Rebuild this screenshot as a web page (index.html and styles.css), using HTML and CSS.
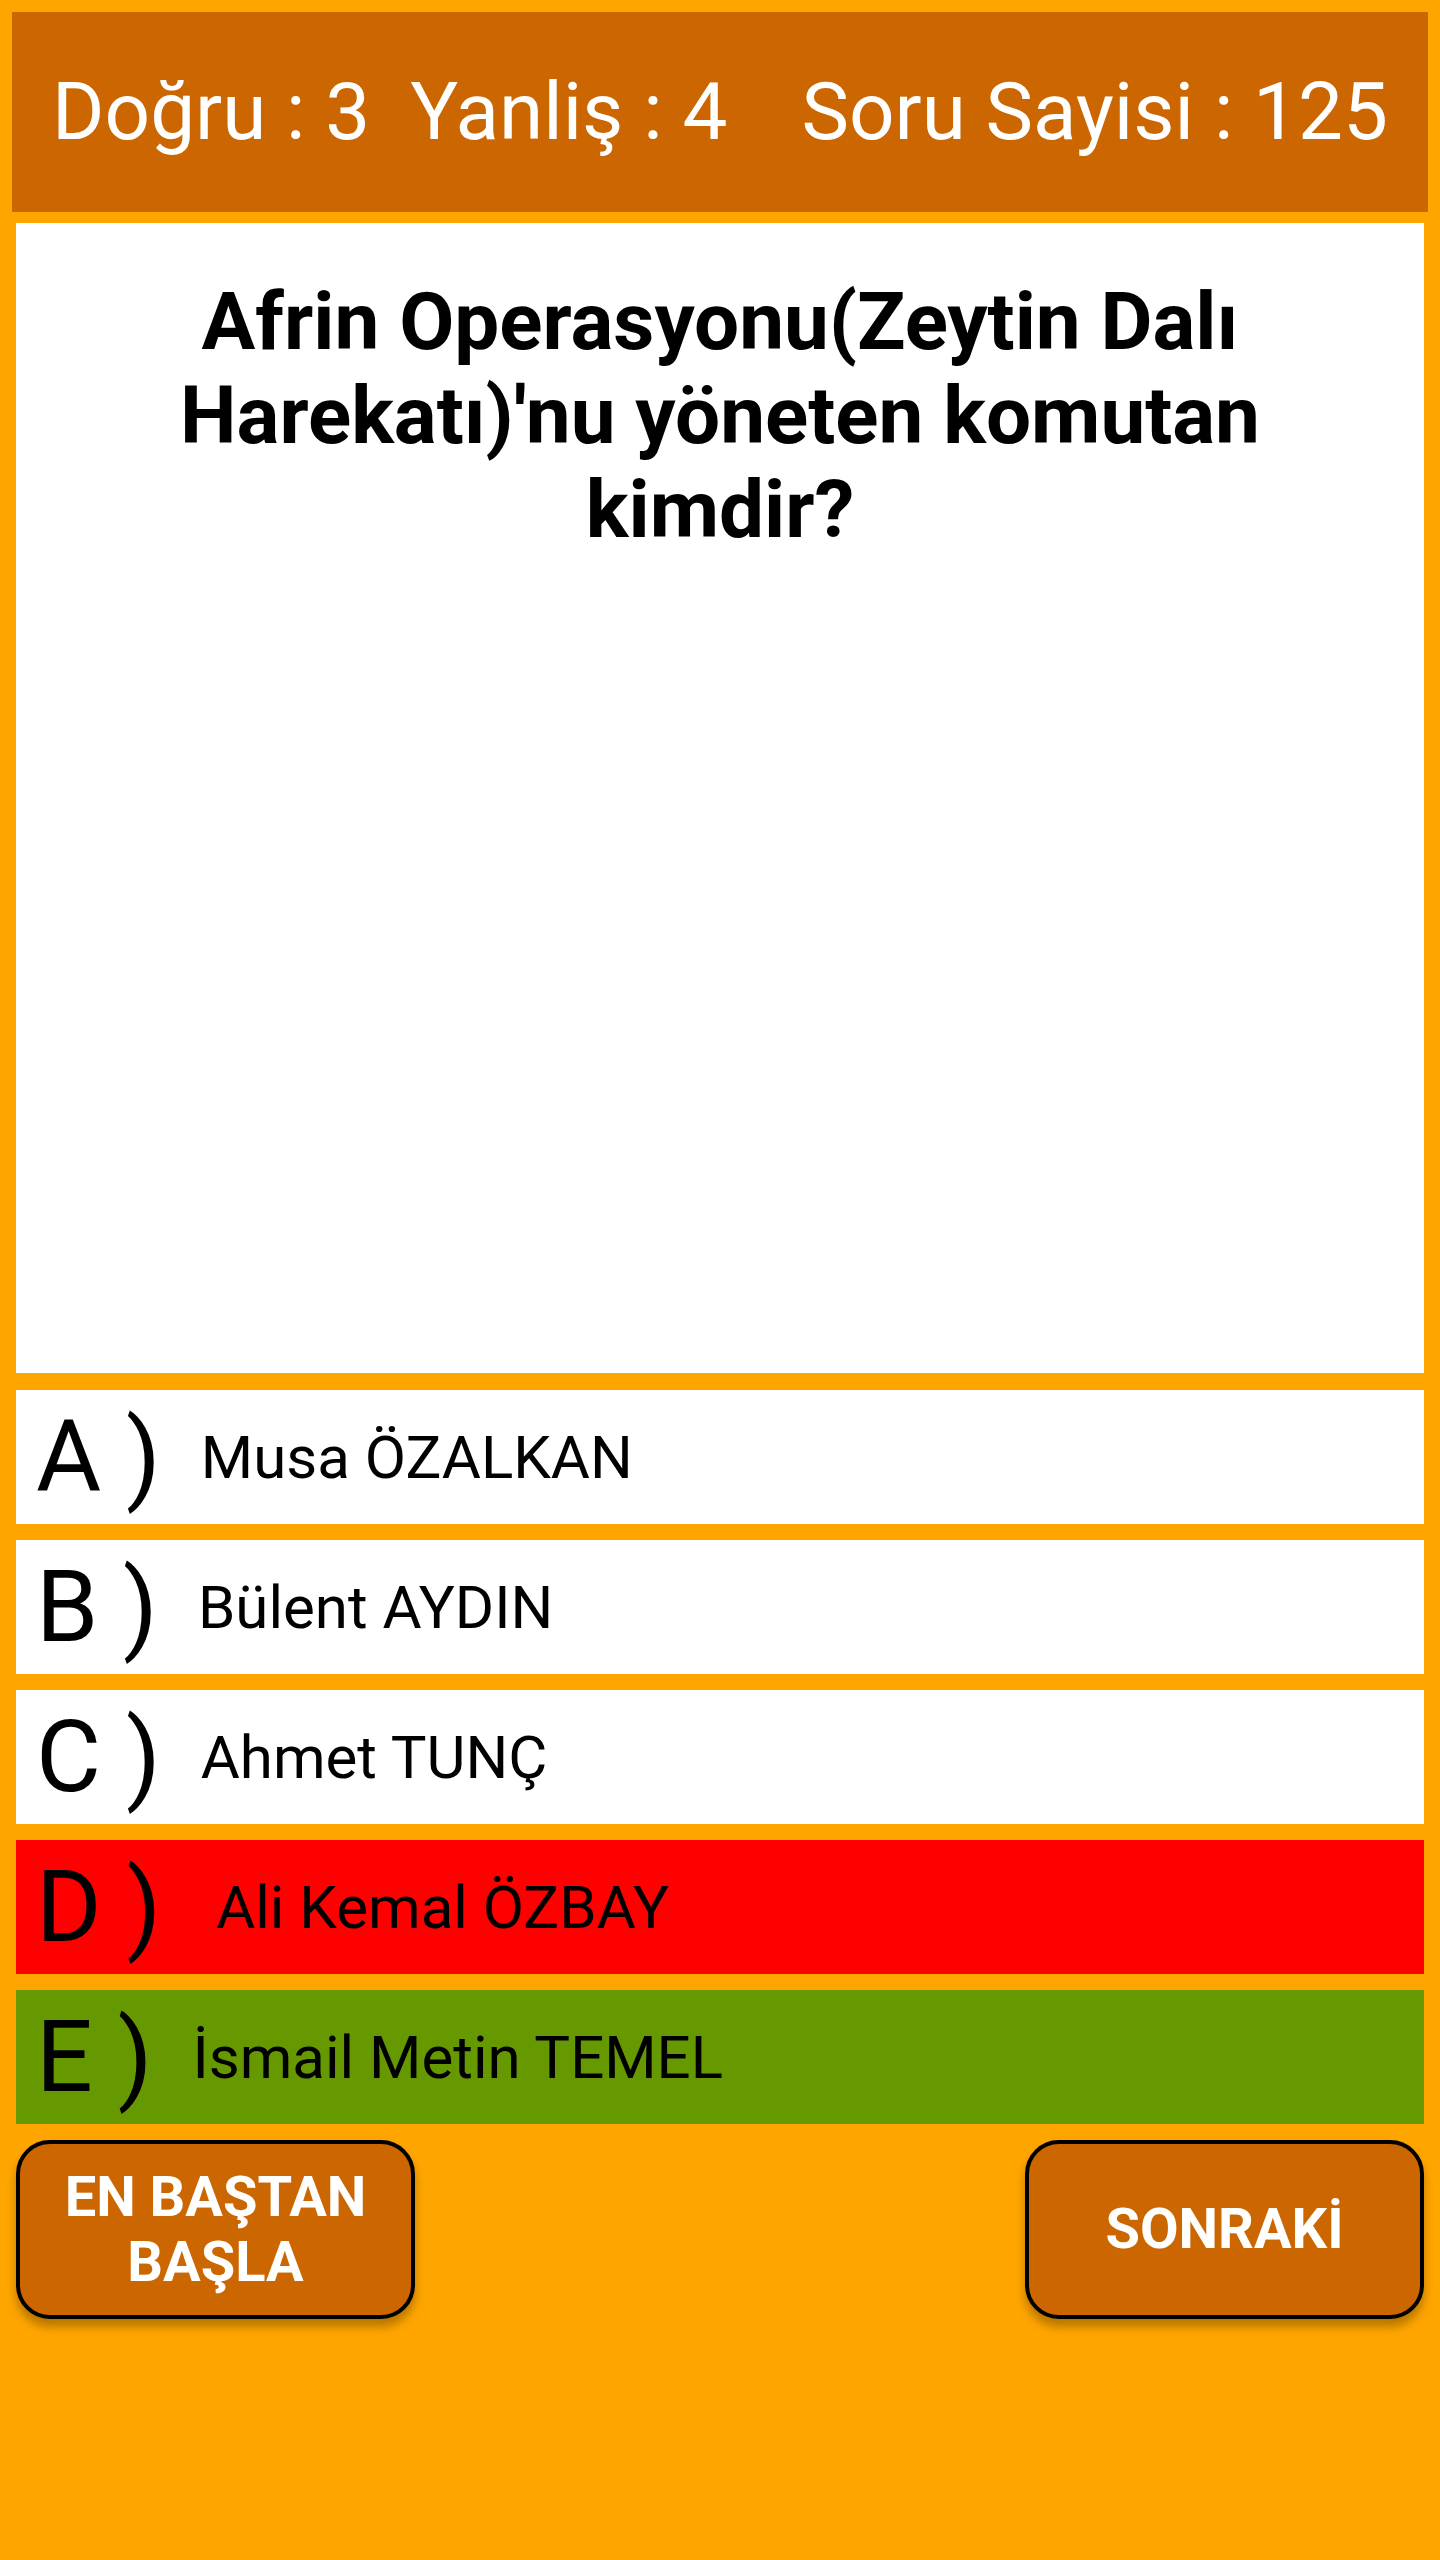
FILE: index.html
```html
<!DOCTYPE html>
<html lang="tr">
<head>
<meta charset="utf-8">
<title>Quiz</title>
<link rel="stylesheet" href="styles.css">
</head>
<body>
<div class="screen">
  <header class="score-bar">
    <span class="score score-correct">Doğru : 3</span>
    <span class="score score-wrong">Yanliş : 4</span>
    <span class="score score-total">Soru Sayisi : 125</span>
  </header>

  <section class="question-card">
    <p class="question-text">Afrin Operasyonu(Zeytin Dalı Harekatı)'nu yöneten komutan kimdir?</p>
  </section>

  <div class="options">
    <div class="option">
      <span class="option-letter">A )</span>
      <span class="option-text">Musa ÖZALKAN</span>
    </div>
    <div class="option">
      <span class="option-letter">B )</span>
      <span class="option-text">Bülent AYDIN</span>
    </div>
    <div class="option">
      <span class="option-letter">C )</span>
      <span class="option-text">Ahmet TUNÇ</span>
    </div>
    <div class="option option-wrong">
      <span class="option-letter">D )</span>
      <span class="option-text">&nbsp;Ali Kemal ÖZBAY</span>
    </div>
    <div class="option option-correct">
      <span class="option-letter">E )</span>
      <span class="option-text">İsmail Metin TEMEL</span>
    </div>
  </div>

  <div class="actions">
    <button class="action-btn" type="button">EN BAŞTAN<br>BAŞLA</button>
    <button class="action-btn" type="button">SONRAKİ</button>
  </div>
</div>
</body>
</html>
```

FILE: styles.css
```css
html, body {
  margin: 0;
  padding: 0;
}

body {
  background: #FFA500;
  font-family: Roboto, "Noto Sans", "Liberation Sans", sans-serif;
  width: 1440px;
  min-height: 2560px;
}

.screen {
  display: flex;
  flex-direction: column;
  padding: 12px 16px 0 16px;
}

.score-bar {
  margin: 0 -4px;
  height: 200px;
  background: #CC6600;
  color: #FFFFFF;
  display: flex;
  align-items: center;
  padding-left: 40px;
  box-sizing: border-box;
  font-size: 80px;
  white-space: nowrap;
}

.score-wrong {
  margin-left: 40px;
}

.score-total {
  margin-left: 74px;
}

.question-card {
  margin-top: 11px;
  height: 1150px;
  background: #FFFFFF;
  box-sizing: border-box;
  padding: 52px 60px 0;
}

.question-text {
  margin: 0;
  text-align: center;
  font-weight: 700;
  font-size: 80px;
  line-height: 94px;
  color: #000000;
}

.options {
  margin-top: 17px;
  display: flex;
  flex-direction: column;
  gap: 16px;
}

.option {
  height: 134px;
  background: #FFFFFF;
  display: flex;
  align-items: center;
  padding-left: 20px;
  color: #000000;
}

.option-wrong {
  background: #FF0000;
}

.option-correct {
  background: #669900;
}

.option-letter {
  font-size: 100px;
  line-height: 134px;
}

.option-text {
  margin-left: 40px;
  font-size: 60px;
}

.actions {
  margin-top: 16px;
  display: flex;
  justify-content: space-between;
}

.action-btn {
  width: 399px;
  height: 179px;
  background: #CC6600;
  border: 4px solid #000000;
  border-radius: 34px;
  box-shadow: 0 8px 10px rgba(0, 0, 0, 0.28);
  color: #FFFFFF;
  font-family: Roboto, "Noto Sans", "Liberation Sans", sans-serif;
  font-weight: 700;
  font-size: 56px;
  line-height: 65px;
  padding: 0;
  text-align: center;
}
```
